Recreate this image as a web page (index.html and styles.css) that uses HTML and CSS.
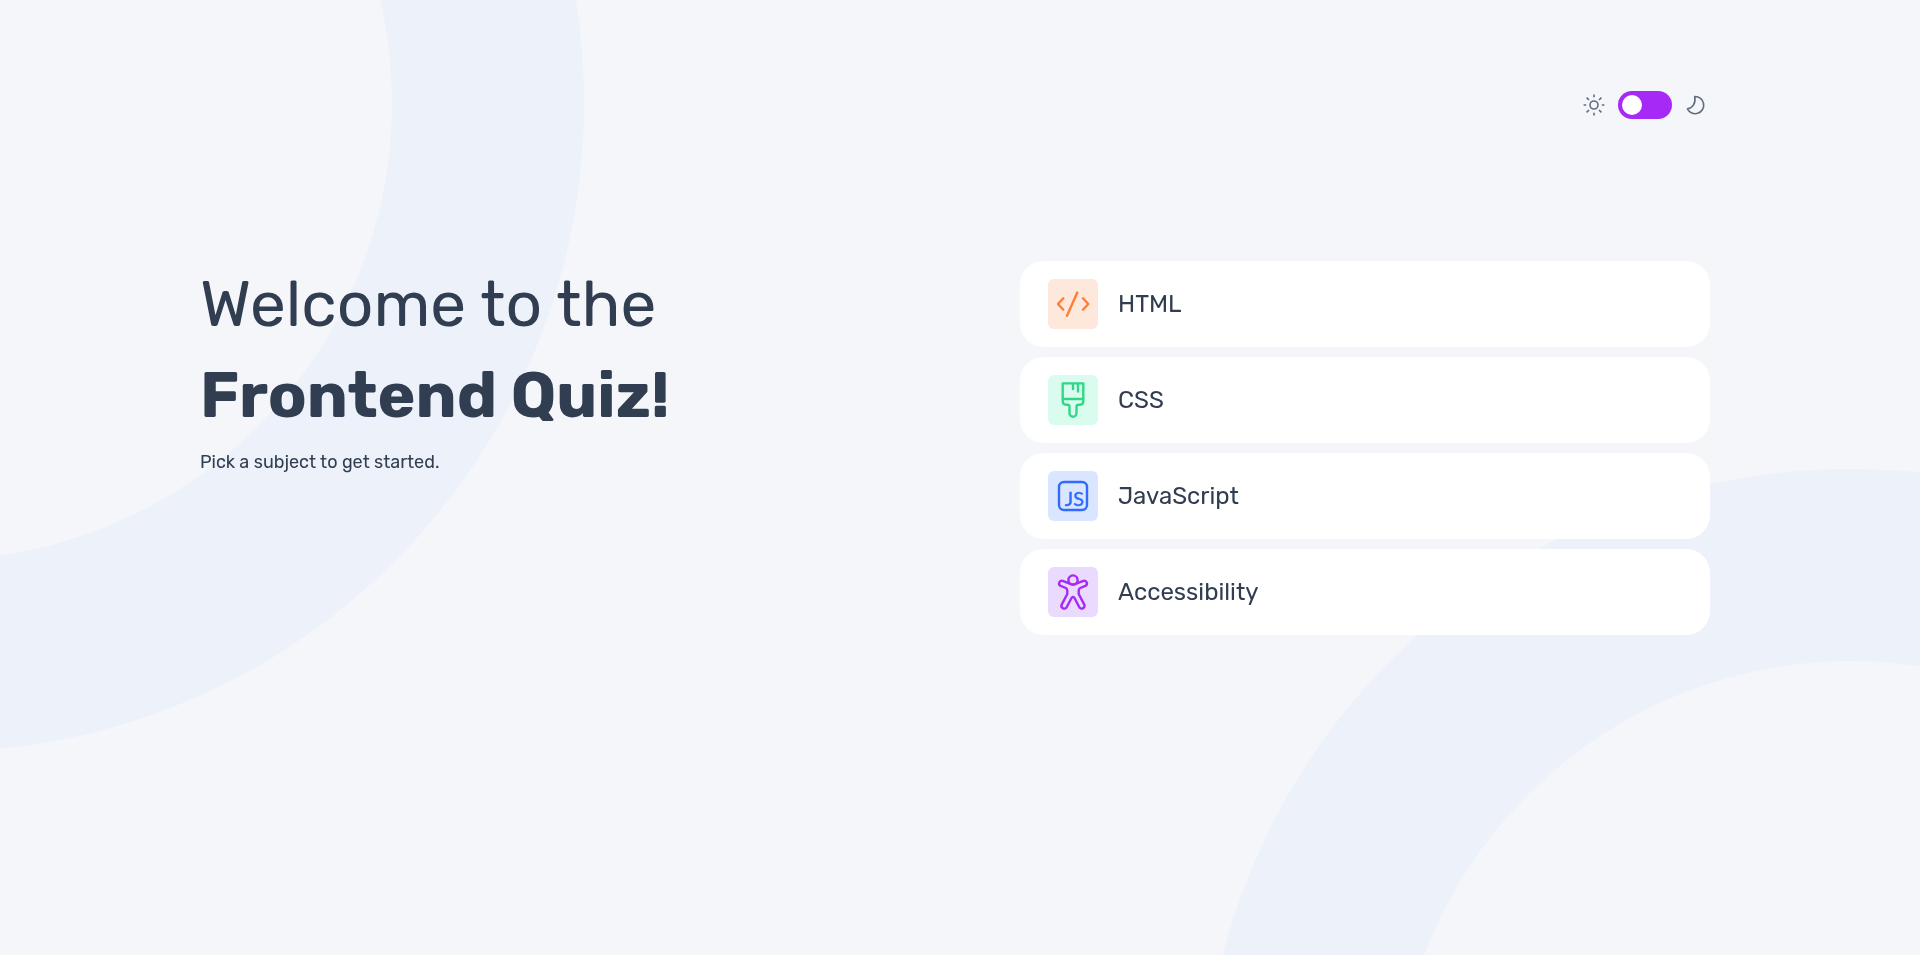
FILE: index.html
```html
<!DOCTYPE html>
<html lang="en">
<head>
<meta charset="utf-8">
<meta name="viewport" content="width=device-width, initial-scale=1">
<title>Frontend Quiz</title>
<link rel="stylesheet" href="styles.css">
</head>
<body>
<div class="backdrop" aria-hidden="true">
  <div class="ring ring-top"></div>
  <div class="ring ring-bottom"></div>
</div>
<div class="page">
  <header class="header">
    <svg class="theme-icon" viewBox="0 0 24 24" aria-hidden="true">
      <circle cx="12" cy="12" r="4"/>
      <path d="M12 1.6v2.6M12 19.8v2.6M1.6 12h2.6M19.8 12h2.6M4.6 4.6l2.4 2.4M17 17l2.4 2.4M19.4 4.6L17 7M7 17l-2.4 2.4"/>
    </svg>
    <input class="switch" type="checkbox" role="switch" aria-label="Dark mode">
    <svg class="theme-icon" viewBox="0 0 24 24" aria-hidden="true">
      <path d="M10.8 3.5A8.6 8.6 0 1 1 3.4 15.9C8.4 15.2 11.9 10.6 10.8 3.5Z"/>
    </svg>
  </header>
  <main class="main">
    <section class="intro">
      <h1 class="title">Welcome to the <strong class="title-strong">Frontend Quiz!</strong></h1>
      <p class="subtitle">Pick a subject to get started.</p>
    </section>
    <div class="subjects">
      <button class="subject" type="button">
        <svg class="subject-icon html" viewBox="0 0 50 50" aria-hidden="true">
          <path d="M15.3 19.3L10 25l5.3 5.7M35 19.3l5.3 5.7-5.3 5.7M29.3 13.5L19 36.8"/>
        </svg>
        <span>HTML</span>
      </button>
      <button class="subject" type="button">
        <svg class="subject-icon css" viewBox="0 0 50 50" aria-hidden="true">
          <path d="M14.7 8.4H35.3V26Q35.3 29.7 32 29.7H30.5Q28.5 29.7 28.5 31.7V38.3A3.5 3.5 0 0 1 21.5 38.3V31.7Q21.5 29.7 19.5 29.7H18Q14.7 29.7 14.7 26ZM14.7 24H35.3M25 8.4V14M30 8.4V16.5"/>
        </svg>
        <span>CSS</span>
      </button>
      <button class="subject" type="button">
        <svg class="subject-icon js" viewBox="0 0 50 50" aria-hidden="true">
          <rect x="11" y="11" width="28" height="28" rx="5"/>
          <text class="js-mark" x="26.5" y="35" text-anchor="middle">JS</text>
        </svg>
        <span>JavaScript</span>
      </button>
      <button class="subject" type="button">
        <svg class="subject-icon a11y" viewBox="0 0 50 50" aria-hidden="true">
          <circle cx="25" cy="13" r="4.6"/>
          <path d="M25 17.6Q22.5 17.2 20.5 16.2L14.6 13.9A2.7 2.7 0 0 0 12.6 18.9L17.8 21Q19.3 21.8 19.3 23.4V27L13.7 37.6A2.8 2.8 0 0 0 18.8 40L23.5 31Q25 28.8 26.5 31L31.2 40A2.8 2.8 0 0 0 36.3 37.6L30.7 27V23.4Q30.7 21.8 32.2 21L37.4 18.9A2.7 2.7 0 0 0 35.4 13.9L29.5 16.2Q27.5 17.2 25 17.6Z"/>
        </svg>
        <span>Accessibility</span>
      </button>
    </div>
  </main>
</div>
</body>
</html>
```
FILE: styles.css
```css
* {
  box-sizing: border-box;
}

body {
  margin: 0;
  background: #f4f6fa;
  color: #313e51;
  font-family: Rubik, Inter, sans-serif;
}

.backdrop {
  position: fixed;
  inset: 0;
  z-index: -1;
  overflow: hidden;
}

.ring {
  position: absolute;
  width: 1298px;
  height: 1298px;
  border: 192px solid #ecf1fa;
  border-radius: 50%;
}

.ring-top {
  top: -546px;
  left: -714px;
}

.ring-bottom {
  right: -580px;
  bottom: -812px;
}

.page {
  padding: 91px 210px 40px 200px;
}

.header {
  display: flex;
  justify-content: flex-end;
  align-items: center;
  gap: 12px;
  padding-right: 2px;
}

.theme-icon {
  width: 24px;
  height: 24px;
  fill: none;
  stroke: #626c7f;
  stroke-width: 1.6;
  stroke-linejoin: round;
}

.switch {
  appearance: none;
  display: flex;
  width: 54px;
  height: 28px;
  margin: 0;
  padding: 4px;
  border-radius: 14px;
  background: #a729f5;
  cursor: pointer;
}

.switch::before {
  content: "";
  width: 20px;
  height: 20px;
  border-radius: 50%;
  background: #fff;
}

.switch:checked {
  justify-content: flex-end;
}

.main {
  display: grid;
  grid-template-columns: 1fr 1fr;
  gap: 130px;
  align-items: start;
  margin-top: 140px;
}

.title {
  margin: 0;
  font-size: 64px;
  line-height: 91px;
  font-weight: 400;
}

.title-strong {
  display: block;
  font-weight: 700;
}

.subtitle {
  margin: 7px 0 0;
  font-size: 18px;
  line-height: 28px;
}

.subjects {
  display: grid;
  gap: 10px;
  margin-top: 2px;
}

.subject {
  display: flex;
  align-items: center;
  gap: 20px;
  padding: 18px 28px;
  border: 0;
  border-radius: 24px;
  background: #fff;
  color: inherit;
  font: inherit;
  font-size: 24px;
  text-align: left;
  cursor: pointer;
}

.subject-icon {
  width: 50px;
  height: 50px;
  border-radius: 6px;
  fill: none;
  stroke-width: 2.4;
  stroke-linecap: round;
  stroke-linejoin: round;
}

.html {
  background: #fde8db;
  stroke: #ff7e35;
}

.css {
  background: #dafcee;
  stroke: #2fd887;
}

.js {
  background: #dae6ff;
  stroke: #306aff;
}

.js-mark {
  fill: #306aff;
  stroke-width: 0.4;
  font-family: "Liberation Sans Narrow", Lato, sans-serif;
  font-size: 20px;
}

.a11y {
  background: #eadafd;
  stroke: #a729f5;
}
```
